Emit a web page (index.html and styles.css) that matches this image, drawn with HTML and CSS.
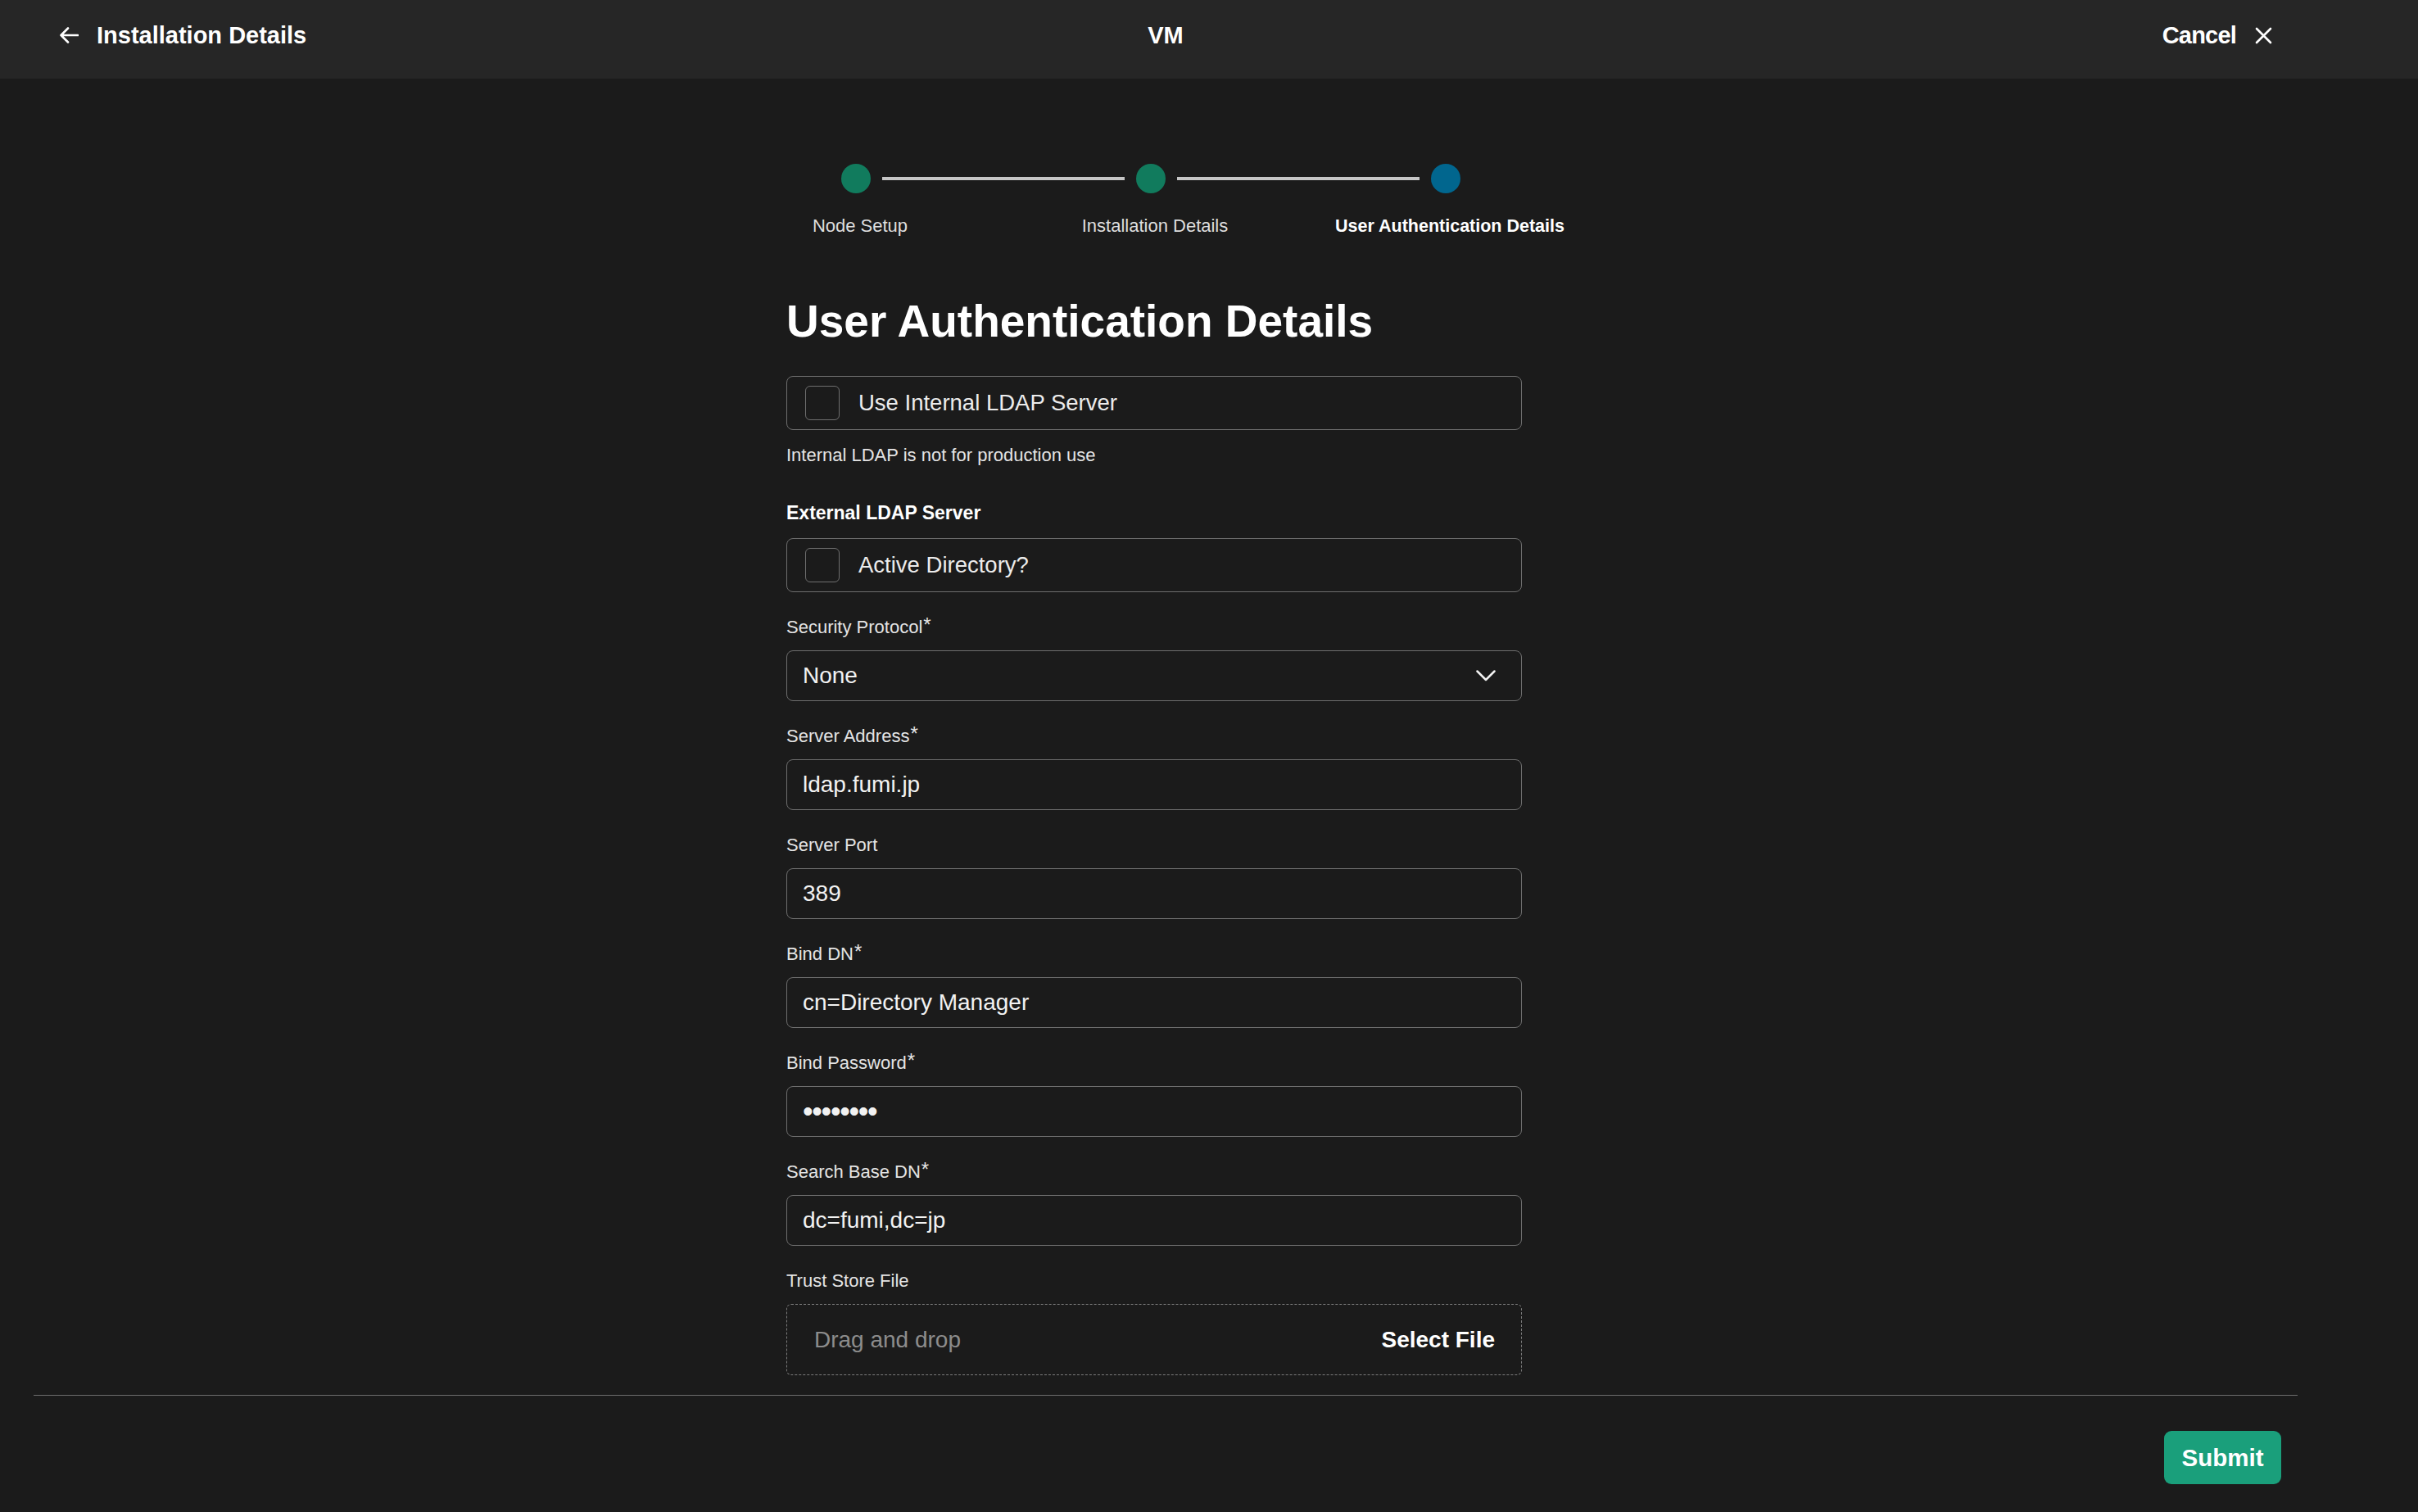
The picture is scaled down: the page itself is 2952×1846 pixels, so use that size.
FILE: index.html
```html
<!DOCTYPE html>
<html lang="en">
<head>
<meta charset="utf-8">
<title>Installation Details - VM</title>
<link rel="stylesheet" href="styles.css">
</head>
<body>
<header class="topbar">
  <div class="topbar-inner">
    <a class="back" href="#">
      <svg class="icon-back" viewBox="0 0 24 22" aria-hidden="true"><path d="M23 11H2.5M11 2.5L2.5 11L11 19.5"/></svg>
      <span>Installation Details</span>
    </a>
    <div class="title">VM</div>
    <a class="cancel" href="#">
      <span>Cancel</span>
      <svg class="icon-close" viewBox="0 0 21 21" aria-hidden="true"><path d="M2 2L19 19M19 2L2 19"/></svg>
    </a>
  </div>
</header>
<div class="page">
  <main class="main">
    <div class="stepper">
      <div class="stepper-track">
        <span class="dot done"></span><span class="bar"></span><span class="dot done"></span><span class="bar"></span><span class="dot active"></span>
      </div>
      <div class="stepper-labels">
        <span>Node Setup</span>
        <span>Installation Details</span>
        <span class="current">User Authentication Details</span>
      </div>
    </div>

    <form class="form">
      <h1>User Authentication Details</h1>

      <div class="check-field first">
        <span class="check-box"></span>
        <span>Use Internal LDAP Server</span>
      </div>
      <p class="help">Internal LDAP is not for production use</p>

      <h2>External LDAP Server</h2>
      <div class="check-field">
        <span class="check-box"></span>
        <span>Active Directory?</span>
      </div>

      <div class="group">
        <div class="label">Security Protocol<sup>*</sup></div>
        <div class="control select">
          <span>None</span>
          <svg class="chev" viewBox="0 0 24 14" aria-hidden="true"><path d="M1.5 1.5L12 12L22.5 1.5"/></svg>
        </div>
      </div>

      <div class="group">
        <div class="label">Server Address<sup>*</sup></div>
        <div class="control">ldap.fumi.jp</div>
      </div>

      <div class="group">
        <div class="label">Server Port</div>
        <div class="control">389</div>
      </div>

      <div class="group">
        <div class="label">Bind DN<sup>*</sup></div>
        <div class="control">cn=Directory Manager</div>
      </div>

      <div class="group">
        <div class="label">Bind Password<sup>*</sup></div>
        <div class="control"><span class="dots">••••••••</span></div>
      </div>

      <div class="group">
        <div class="label">Search Base DN<sup>*</sup></div>
        <div class="control">dc=fumi,dc=jp</div>
      </div>

      <div class="group">
        <div class="label">Trust Store File</div>
        <div class="drop">
          <span class="hint">Drag and drop</span>
          <span class="pick">Select File</span>
        </div>
      </div>
    </form>
  </main>

  <footer class="footer">
    <button class="submit" type="button">Submit</button>
  </footer>
</div>
</body>
</html>
```

FILE: styles.css
```css
* {
  box-sizing: border-box;
}

html,
body {
  margin: 0;
  padding: 0;
}

body {
  width: 2952px;
  height: 1846px;
  overflow: hidden;
  background: #1b1b1b;
  color: #f5f5f5;
  font-family: "Liberation Sans", Arial, sans-serif;
}

/* ---------- top bar ---------- */
.topbar {
  background: #262626;
  height: 96px;
}

.topbar-inner {
  width: 2846px;
  height: 96px;
  padding: 23px 72px 0;
  display: grid;
  grid-template-columns: 1fr auto 1fr;
  align-items: start;
}

.back,
.cancel,
.title {
  color: #fff;
  text-decoration: none;
  font-weight: 700;
  font-size: 29px;
  line-height: 40px;
}

.back,
.cancel {
  display: flex;
  align-items: center;
}

.back {
  justify-self: start;
  gap: 22px;
}

.cancel {
  justify-self: end;
  gap: 23px;
  letter-spacing: -0.8px;
}

.icon-back {
  width: 24px;
  height: 22px;
  fill: none;
  stroke: #fff;
  stroke-width: 2.6;
  stroke-linecap: round;
  stroke-linejoin: round;
}

.icon-close {
  width: 21px;
  height: 21px;
  fill: none;
  stroke: #fff;
  stroke-width: 2.6;
  stroke-linecap: round;
}

/* ---------- page ---------- */
.page {
  width: 2846px;
}

.main {
  height: 1607px;
  overflow: hidden;
  padding: 104px 36px 0 0;
}

/* ---------- stepper ---------- */
.stepper {
  width: 1080px;
  margin: 0 auto;
}

.stepper-track {
  width: 756px;
  margin: 0 auto;
  display: flex;
  align-items: center;
}

.dot {
  flex: none;
  width: 36px;
  height: 36px;
  border-radius: 50%;
}

.dot.done {
  background: #117b5d;
}

.dot.active {
  background: #01668e;
}

.bar {
  flex: 1;
  height: 4px;
  margin: 0 14px;
  background: #c6c6c6;
}

.stepper-labels {
  margin: 25px 0 0 5px;
  display: grid;
  grid-template-columns: repeat(3, 360px);
  text-align: center;
  font-size: 22px;
  line-height: 30px;
  color: #dedede;
}

.stepper-labels .current {
  font-weight: 700;
  font-size: 21.5px;
  color: #fff;
}

/* ---------- form ---------- */
.form {
  width: 898px;
  margin-left: calc(50% - 445px);
}

.form h1 {
  margin: 68px 0 0;
  font-size: 55px;
  line-height: 66px;
  font-weight: 700;
  color: #fff;
}

.check-field {
  margin-top: 16px;
  height: 66px;
  display: flex;
  align-items: center;
  gap: 23px;
  padding-left: 22px;
  border: 1px solid #6e6e6e;
  border-radius: 8px;
  font-size: 27.5px;
  color: #ececec;
}

.check-field.first {
  margin-top: 34px;
}

.check-box {
  flex: none;
  width: 42px;
  height: 42px;
  border: 1px solid #6e6e6e;
  border-radius: 6px;
}

.help {
  margin: 16px 0 0;
  font-size: 22px;
  line-height: 30px;
  color: #e4e4e4;
}

.form h2 {
  margin: 40px 0 0;
  font-size: 23px;
  line-height: 30px;
  font-weight: 700;
  color: #fff;
}

.group {
  margin-top: 28px;
}

.label {
  font-size: 22px;
  line-height: 30px;
  color: #e4e4e4;
}

.label sup {
  font-size: 24px;
  line-height: 0;
  vertical-align: 2px;
  margin-left: 1px;
}

.control {
  margin-top: 13px;
  height: 62px;
  display: flex;
  align-items: center;
  padding: 0 31px 0 19px;
  border: 1px solid #6e6e6e;
  border-radius: 8px;
  font-size: 28px;
  color: #f2f2f2;
}

.select {
  justify-content: space-between;
}

.chev {
  width: 24px;
  height: 14px;
  fill: none;
  stroke: #f2f2f2;
  stroke-width: 2.5;
  stroke-linecap: round;
  stroke-linejoin: round;
}

.dots {
  font-size: 36px;
  letter-spacing: -1.3px;
}

.drop {
  margin-top: 13px;
  height: 87px;
  display: flex;
  align-items: center;
  justify-content: space-between;
  padding: 0 32px 0 33px;
  border: 1px dashed #7b7b7b;
  border-radius: 6px;
  font-size: 28px;
}

.drop .hint {
  color: #8c8c8c;
}

.drop .pick {
  font-weight: 700;
  color: #fff;
}

/* ---------- footer ---------- */
.footer {
  margin: 0 41px;
  padding: 43px 20px 0 0;
  border-top: 1px solid #6c6c6c;
  display: flex;
  justify-content: flex-end;
}

.submit {
  width: 143px;
  height: 65px;
  border: 0;
  border-radius: 9px;
  background: #1a9f7b;
  color: #fff;
  font-family: "Liberation Sans", Arial, sans-serif;
  font-weight: 700;
  font-size: 29.5px;
  cursor: pointer;
}
```
